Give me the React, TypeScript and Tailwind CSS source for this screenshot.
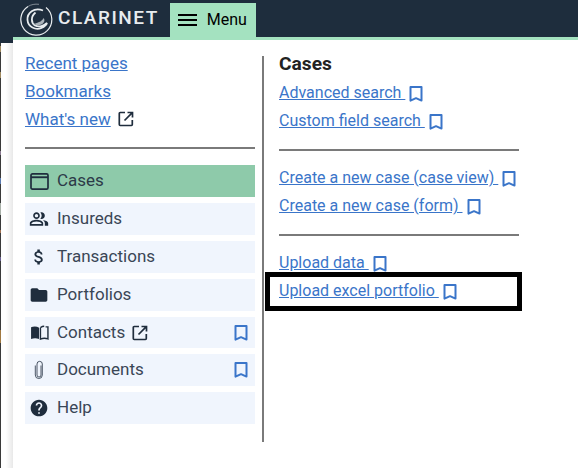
import React from "react";

const font = { fontFamily: "Roboto, sans-serif" };

const Bookmark = ({ className = "" }: { className?: string }) => (
  <svg viewBox="0 0 14 16" className={`h-[16px] w-[14px] shrink-0 ${className}`} fill="none" stroke="#3a75c9" strokeWidth="2">
    <path d="M1.5 1h11v13.6L7 12.2 1.5 14.6z" strokeLinejoin="round" />
  </svg>
);

const External = () => (
  <svg viewBox="0 0 16 16" className="h-[16px] w-[16px] shrink-0" fill="none" stroke="#1f2d3d" strokeWidth="1.7">
    <path d="M7 1.5H2.2a.9.9 0 0 0-.9.9v11.2c0 .5.4.9.9.9h11.2c.5 0 .9-.4.9-.9V9" />
    <path d="M9.5 1.5h5v5M14.3 1.7 6.5 9.5" />
  </svg>
);

const Logo = () => (
  <svg viewBox="0 0 34 34" className="h-[34px] w-[34px] shrink-0" fill="none" stroke="#e8ecef">
    <path d="M27 5.500A15.500 15.500 0 1 1 9 4.500" strokeWidth="1.200" />
    <path d="M9 4.500C12 2.500 16 1.800 20 2.300" strokeWidth="0.700" stroke="#aab2b9" />
    <path d="M24 8.500C15 5 8 11 8.500 18c.5 7 8 10.500 14 8 3.500-1.500 5-3.500 5.500-5-3 3-8 4.500-12 2.500-4-2.500-4.500-9 .5-13" strokeWidth="1.800" />
    <path d="M14 22c4 2 9 1.500 11-2 .8-1.500.4-3-.5-4-1 2.500-3.500 4.500-10.500 6z" fill="#aab2b9" stroke="none" />
  </svg>
);

const icons: Record<string, React.ReactNode> = {
  cases: (
    <svg viewBox="0 0 20 18" className="h-[17px] w-[19px]" fill="none" stroke="#1f2d3d" strokeWidth="1.800">
      <rect x="1" y="1" width="18" height="16" rx="1.500" />
      <path d="M1 4.500h18" strokeWidth="2" />
    </svg>
  ),
  insureds: (
    <svg viewBox="0 0 24 24" className="h-[20px] w-[20px]" fill="#1f2d3d">
      <path d="M16.670 13.130C18.040 14.060 19 15.320 19 17v3h4v-3c0-2.180-3.570-3.470-6.330-3.870zM15 12c2.210 0 4-1.790 4-4s-1.790-4-4-4c-.47 0-.91.1-1.330.24a5.980 5.980 0 0 1 0 7.520c.42.14.86.24 1.330.24zM9 12c2.210 0 4-1.790 4-4s-1.790-4-4-4-4 1.790-4 4 1.790 4 4 4zm0-6c1.100 0 2 .9 2 2s-.9 2-2 2-2-.9-2-2 .9-2 2-2zM9 13c-2.670 0-8 1.340-8 4v3h16v-3c0-2.660-5.330-4-8-4zm6 5H3v-.99C3.200 16.290 6.300 15 9 15s5.800 1.290 6 2v1z" />
    </svg>
  ),
  transactions: (
    <svg viewBox="0 0 24 24" className="h-[20px] w-[20px]" fill="#1f2d3d">
      <path d="M11.800 10.900c-2.270-.59-3-1.200-3-2.150 0-1.090 1.010-1.850 2.700-1.850 1.780 0 2.440.85 2.500 2.100h2.210c-.07-1.720-1.120-3.300-3.210-3.810V3h-3v2.160c-1.940.42-3.500 1.680-3.500 3.610 0 2.310 1.910 3.460 4.700 4.130 2.500.6 3 1.480 3 2.410 0 .69-.49 1.790-2.700 1.790-2.060 0-2.870-.92-2.980-2.100h-2.200c.12 2.190 1.760 3.420 3.680 3.830V21h3v-2.150c1.950-.37 3.500-1.500 3.500-3.550 0-2.840-2.430-3.810-4.700-4.400z" />
    </svg>
  ),
  portfolios: (
    <svg viewBox="0 0 24 24" className="h-[20px] w-[20px]" fill="#1f2d3d">
      <path d="M10 4H4c-1.100 0-2 .9-2 2v12c0 1.100.9 2 2 2h16c1.100 0 2-.9 2-2V8c0-1.100-.9-2-2-2h-8l-2-2z" />
    </svg>
  ),
  contacts: (
    <svg viewBox="0 0 20 16" className="h-[15px] w-[19px]" fill="none">
      <path d="M1 2.500C3.500 1.300 7 1.300 9.500 2.800V15C7 13.700 3.500 13.700 1 15z" fill="#1f2d3d" />
      <path d="M11 2.800c1.500-1 3-1.400 4-1.400M16.500 2H19v12.800c-2.700-1-5.500-.9-8 .2V2.800" stroke="#1f2d3d" strokeWidth="1.500" />
    </svg>
  ),
  documents: (
    <svg viewBox="0 0 12 20" className="h-[20px] w-[12px]" fill="none" stroke="#3a4656" strokeWidth="0.900">
      <path d="M8 5.500v9.500a2 2 0 0 1-4 0V4a2.600 2.600 0 0 1 5.300 0v11a3.500 3.500 0 0 1-7 0V5.500" />
    </svg>
  ),
  help: (
    <svg viewBox="0 0 24 24" className="h-[20px] w-[20px]" fill="#1f2d3d">
      <path d="M12 2C6.480 2 2 6.480 2 12s4.480 10 10 10 10-4.480 10-10S17.520 2 12 2zm1 17h-2v-2h2v2zm2.070-7.750-.9.920C13.450 12.900 13 13.500 13 15h-2v-.5c0-1.100.45-2.100 1.170-2.830l1.240-1.260c.37-.36.59-.86.590-1.410 0-1.100-.9-2-2-2s-2 .9-2 2H8c0-2.210 1.790-4 4-4s4 1.790 4 4c0 .88-.36 1.680-.93 2.250z" />
    </svg>
  ),
};

const navItems = [
  { key: "cases", label: "Cases", active: true },
  { key: "insureds", label: "Insureds" },
  { key: "transactions", label: "Transactions" },
  { key: "portfolios", label: "Portfolios" },
  { key: "contacts", label: "Contacts", external: true, bookmark: true },
  { key: "documents", label: "Documents", bookmark: true },
  { key: "help", label: "Help" },
];

const Rule = ({ className = "" }: { className?: string }) => <div className={`h-[2px] bg-[#7a7a7a] ${className}`} />;

const CaseLink = ({ label }: { label: string }) => (
  <div className="flex h-[28px] items-center">
    <a href="#" className="whitespace-pre text-[16px] leading-[22px] text-[#3a75c9] underline">
      {label + " "}
    </a>
    <Bookmark className="ml-[4px] mt-[2px]" />
  </div>
);

export default function App() {
  return (
    <div style={font} className="h-[468px] w-[578px] overflow-hidden bg-white">
      <header className="flex h-[37px] items-start bg-[#1e2d3d] pl-[19px]">
        <div className="flex h-[37px] items-center gap-[5px]">
          <Logo />
          <span className="text-[19px] font-medium tracking-[1.500px] text-[#e8ecef]">CLARINET</span>
        </div>
        <button className="ml-[11px] mt-[3px] flex h-[34px] w-[86px] items-center gap-[10px] bg-[#a4e2c0] pl-[8px] text-[16px] text-black">
          <span className="flex w-[19px] flex-col gap-[3px]">
            <span className="h-[2px] bg-black" />
            <span className="h-[2px] bg-black" />
            <span className="h-[2px] bg-black" />
          </span>
          Menu
        </button>
      </header>
      <div className="flex h-[431px]">
        {/* page behind the menu, only a sliver of it shows */}
        <div className="flex w-[13px] shrink-0 flex-col">
          <div className="h-[6px] bg-[#1e2d3d]" />
          <div className="flex flex-1">
            <div className="w-[1px] bg-[linear-gradient(to_bottom,#3a3a3a_3px,#a08a60_3px,#a08a60_9px,#3a3a3a_9px,#3a3a3a_29px,#a08a60_29px,#a08a60_35px,#3a3a3a_35px,#3a3a3a_108px,#8a7a90_108px,#8a7a90_112px,#3a3a3a_112px,#3a3a3a_135px,#5a7ab0_135px,#5a7ab0_141px,#3a3a3a_141px,#3a3a3a_160px,#a8b0a8_160px,#a8b0a8_172px,#3a3a3a_172px,#3a3a3a_187px,#a07050_187px,#a07050_190px,#3a3a3a_190px,#3a3a3a_214px,#6a6090_214px,#6a6090_218px,#3a3a3a_218px,#3a3a3a_287px,#a07840_287px,#a07840_300px,#3a3a3a_300px)]" />
            <div className="flex-1 bg-[linear-gradient(to_right,#ffffff_40%,#e8e8e8_100%)]" />
          </div>
        </div>
        <div className="flex flex-1 border-t-[3px] border-[#a4e2c0] pl-[12px] pt-[9px]">
          <div className="flex w-[230px] shrink-0 flex-col">
            <div className="flex flex-col text-[17px] leading-[28px] text-[#3a75c9]">
              <a href="#" className="self-start underline">Recent pages</a>
              <a href="#" className="self-start underline">Bookmarks</a>
              <div className="flex items-center gap-[7px]">
                <a href="#" className="underline">What's new</a>
                <External />
              </div>
            </div>
            <Rule className="mt-[14px]" />
            <div className="mt-[16px] flex flex-col gap-[6px]">
              {navItems.map((item) => (
                <div
                  key={item.key}
                  className={`flex items-center text-[17px] ${item.key === "contacts" ? "h-[31px]" : "h-[32px]"} ${item.active ? "bg-[#8ecaaa] text-[#2c3a48]" : "bg-[#f0f5fd] text-[#3a4656]"}`}
                >
                  <span className="mr-[4px] flex w-[28px] shrink-0 items-center justify-center">{icons[item.key]}</span>
                  <span>{item.label}</span>
                  {item.external && <span className="ml-[7px]"><External /></span>}
                  {item.bookmark && <Bookmark className="ml-auto mr-[7px]" />}
                </div>
              ))}
            </div>
          </div>
          <div className="ml-[7px] mt-[7px] h-[386px] w-[2px] shrink-0 bg-[#7a7a7a]" />
          <div className="w-[240px] shrink-0 pl-[15px] pt-[4px] box-content">
            <h2 className="text-[19.2px] font-bold leading-[22px] text-[#222222]">Cases</h2>
            <div className="mt-[4px]">
              <CaseLink label="Advanced search" />
              <CaseLink label="Custom field search" />
            </div>
            <Rule className="mt-[14px]" />
            <div className="mt-[13px]">
              <CaseLink label="Create a new case (case view)" />
              <CaseLink label="Create a new case (form)" />
            </div>
            <Rule className="mt-[14px]" />
            <div className="mt-[13px]">
              <CaseLink label="Upload data" />
              <div className="relative">
                <CaseLink label="Upload excel portfolio" />
                <div className="pointer-events-none absolute -left-[14px] -top-[5px] h-[39px] w-[257px] border-[5px] border-black" />
              </div>
            </div>
          </div>
        </div>
      </div>
    </div>
  );
}
